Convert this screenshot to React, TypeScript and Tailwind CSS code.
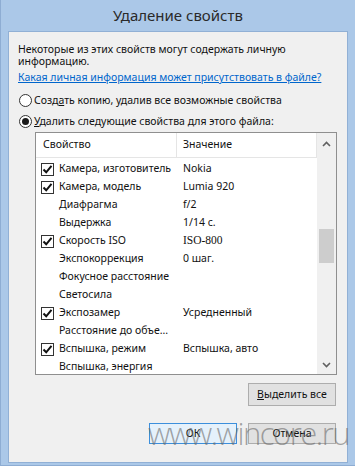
import React from "react";

type Row = {
  name: string;
  value?: string;
  checked?: boolean;
  serif?: boolean;
};

const rows: Row[] = [
  { name: "Камера, изготовитель", value: "Nokia", checked: true },
  { name: "Камера, модель", value: "Lumia 920", checked: true },
  { name: "Диафрагма", value: "f/2" },
  { name: "Выдержка", value: "1/14 c." },
  { name: "Скорость ISO", value: "ISO-800", checked: true, serif: true },
  { name: "Экспокоррекция", value: "0 шаг." },
  { name: "Фокусное расстояние" },
  { name: "Светосила" },
  { name: "Экспозамер", value: "Усредненный", checked: true },
  { name: "Расстояние до объе..." },
  { name: "Вспышка, режим", value: "Вспышка, авто", checked: true },
  { name: "Вспышка, энергия" },
];

const Radio = ({ checked }: { checked?: boolean }) => (
  <span className="w-[13px] h-[13px] rounded-full border border-[#333] bg-white flex items-center justify-center shrink-0">
    {checked && <span className="w-[7px] h-[7px] rounded-full bg-[#1a1a1a]" />}
  </span>
);

const Check = () => (
  <span className="w-[13px] h-[13px] border border-[#333] bg-white flex items-center justify-center shrink-0">
    <svg width="11" height="11" viewBox="0 0 11 11">
      <path d="M1.5 5.5 L4.2 8.3 L9.5 1.8" stroke="#111" strokeWidth="2" fill="none" />
    </svg>
  </span>
);

const Arrow = ({ up }: { up?: boolean }) => (
  <svg width="9" height="6" viewBox="0 0 9 6">
    <path d={up ? "M1 5 L4.5 1.5 L8 5" : "M1 1 L4.5 4.5 L8 1"} stroke="#606060" strokeWidth="1.6" fill="none" />
  </svg>
);

export default function App() {
  return (
    <div
      className="relative w-[355px] h-[466px] bg-[#abc8e8] border-l border-b border-[#8eadd3] text-[10.5px] text-[#111] flex flex-col overflow-hidden"
      style={{ fontFamily: '"Noto Sans", "Open Sans", sans-serif' }}
    >
      <div className="h-[31px] flex items-center justify-center text-[15px] text-[#2a2a2a] shrink-0">
        Удаление свойств
      </div>
      <div className="ml-[7px] w-[340px] h-[432px] bg-[#f0f0f0] border border-[#91b0d5] pt-[11px] pl-[9px] flex flex-col">
        <p className="leading-[12px]">
          Некоторые из этих свойств могут содержать личную
          <br />
          информацию.
        </p>
        <a className="mt-[4px] leading-[12px] text-[#0066cc] underline">
          Какая личная информация может присутствовать в файле?
        </a>
        <label className="mt-[9px] h-[17px] flex items-center gap-[2px] ml-[1px]">
          <Radio />
          <span>
            Созд<span className="underline">а</span>ть копию, удалив все возможные свойства
          </span>
        </label>
        <label className="mt-[4px] h-[17px] flex items-center gap-[2px] ml-[1px]">
          <Radio checked />
          <span>
            <span className="underline">У</span>далить следующие свойства для этого файла:
          </span>
        </label>

        <div className="mt-[2px] ml-[17px] w-[302px] h-[243px] border border-[#8f8f8f] bg-white flex overflow-hidden">
          <div className="flex-1 flex flex-col">
            <div className="h-[25px] flex items-center border-b border-[#e5e5e5] shrink-0">
              <div className="w-[141px] h-full pl-[7px] flex items-center border-r border-[#e5e5e5]">
                Свойство
              </div>
              <div className="flex-1 h-full pl-[6px] flex items-center border-r border-[#e5e5e5]">
                Значение
              </div>
            </div>
            <div className="pt-[2px] flex flex-col">
              {rows.map((r) => (
                <div key={r.name} className="h-[18px] flex items-center shrink-0">
                  <div className="w-[141px] pl-[5px] flex items-center gap-[5px]">
                    {r.checked ? <Check /> : <span className="w-[13px] shrink-0" />}
                    <span className="whitespace-nowrap">{r.name}</span>
                  </div>
                  <div
                    className="pl-[6px] whitespace-nowrap"
                    style={r.serif ? { fontFamily: '"Liberation Serif", serif', fontSize: 11.5 } : undefined}
                  >
                    {r.value}
                  </div>
                </div>
              ))}
            </div>
          </div>
          <div className="w-[19px] bg-[#f0f0f0] flex flex-col items-center shrink-0">
            <div className="h-[19px] mt-[1px] flex items-center justify-center">
              <Arrow up />
            </div>
            <div className="mt-[76px] w-[15px] h-[34px] bg-[#cdcdcd]" />
            <div className="flex-1" />
            <div className="h-[19px] flex items-center justify-center">
              <Arrow />
            </div>
          </div>
        </div>

        <div className="mt-[8px] mr-[11px] flex justify-end">
          <button className="w-[88px] h-[23px] bg-[#e1e1e1] border border-[#adadad]">
            <span className="underline">В</span>ыделить все
          </button>
        </div>
        <div className="mt-[17px] mr-[11px] flex justify-end gap-[11px]">
          <button className="w-[88px] h-[21px] bg-[#e5f1fb] border border-[#3c8fdc]">ОК</button>
          <button className="w-[88px] h-[21px] bg-[#e1e1e1] border border-[#adadad]">Отмена</button>
        </div>
      </div>

      <div
        className="absolute left-[147px] top-[416px] text-[31px] leading-[34px] font-light text-[#6a6a6a]/60 tracking-[-1.5px] whitespace-nowrap pointer-events-none"
        style={{ fontFamily: '"Open Sans", sans-serif' }}
      >
        www.wincore.ru
      </div>
    </div>
  );
}
